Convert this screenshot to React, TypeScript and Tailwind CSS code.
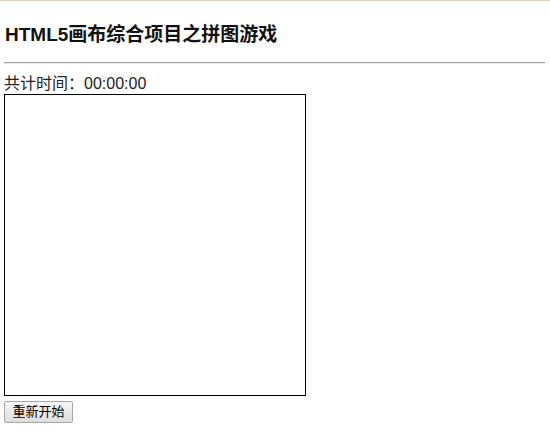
import React from "react";

const font = { fontFamily: '"Liberation Sans", "Noto Sans CJK SC", sans-serif' };

export default function App() {
  return (
    <div className="w-[550px] h-[434px] bg-white text-black" style={font}>
      {/* thin beige strip at the top edge */}
      <div className="h-px bg-[#dcd3b6]" />
      <div className="pl-[4px] pr-[5px]">
        <h3 className="mt-[22px] pl-px text-[19px] leading-[24px] font-bold text-[#111]">
          HTML5画布综合项目之拼图游戏
        </h3>
        <div className="mt-[15px] border-t border-[#a0a0a0] border-b border-b-[#ececec]" />
        <div className="mt-[10px] text-[16px] leading-[20px] text-[#222]">共计时间：00:00:00</div>
        <div className="w-[302px] h-[302px] border border-black bg-white" />
        <button className="mt-[5px] h-[22px] w-[69px] border border-[#a8a8a8] rounded-[2px] bg-gradient-to-b from-[#f6f6f6] to-[#dedede] text-[13px] leading-[18px] text-black">
          重新开始
        </button>
      </div>
    </div>
  );
}
